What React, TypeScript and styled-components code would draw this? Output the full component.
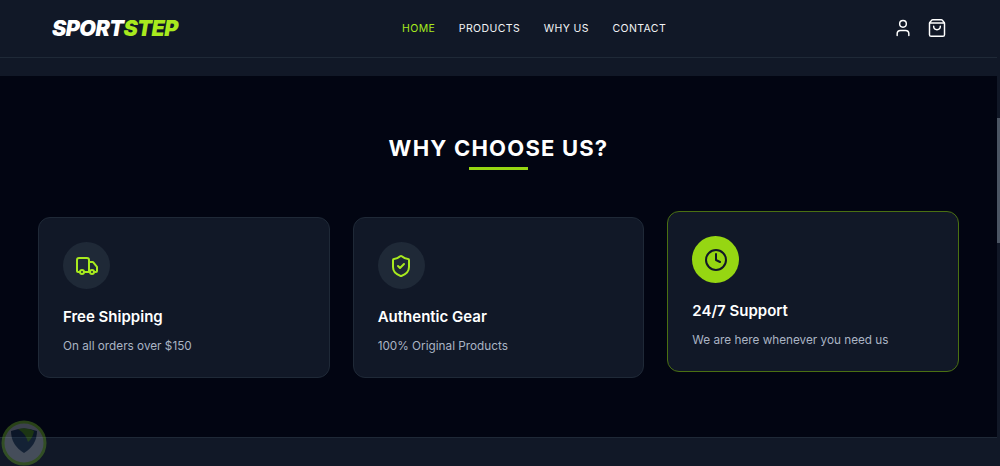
import React from "react";
import styled, { createGlobalStyle } from "styled-components";
import { Clock, ShieldCheck, ShoppingBag, Truck, User } from "lucide-react";

const LIME = "#96d612";
const LIME_BRIGHT = "#a8ea1e";

const GlobalStyle = createGlobalStyle`
  html, body {
    margin: 0;
    height: 100%;
    overflow: hidden;
    background: #020512;
    font-family: Inter, "Liberation Sans", sans-serif;
  }
`;

const Page = styled.div`
  height: 466px;
  margin-right: 3px;
  display: flex;
  flex-direction: column;
  overflow: hidden;
`;

const Header = styled.header`
  height: 58px;
  flex: none;
  box-sizing: border-box;
  padding: 0 50px 1px 52px;
  display: grid;
  grid-template-columns: 350px auto 1fr;
  align-items: center;
  background: #111827;
  border-bottom: 1px solid #1f2937;
`;

const Logo = styled.div`
  font-size: 21.5px;
  font-weight: 900;
  font-style: italic;
  letter-spacing: -0.55px;
  color: #fff;
  span {
    color: ${LIME_BRIGHT};
  }
`;

const Nav = styled.nav`
  display: flex;
  gap: 23.6px;
`;

const NavLink = styled.a<{ $active?: boolean }>`
  font-size: 10.5px;
  font-weight: 400;
  letter-spacing: 0.4px;
  color: ${(p) => (p.$active ? LIME_BRIGHT : "#f3f4f6")};
`;

const HeaderIcons = styled.div`
  justify-self: end;
  display: flex;
  align-items: center;
  gap: 14px;
  color: #fff;
`;

const Strip = styled.div`
  height: 18px;
  flex: none;
  background: #111827;
`;

const Section = styled.section`
  flex: none;
  height: 361px;
  padding: 58px 38px 0;
  box-sizing: border-box;
  background: #020512;
`;

const Title = styled.h2`
  margin: 0;
  text-align: center;
  font-size: 22px;
  line-height: 28px;
  font-weight: 700;
  letter-spacing: 1.2px;
  color: #fff;
`;

const Underline = styled.div`
  width: 59px;
  height: 3px;
  margin: 5px auto 47px;
  background: ${LIME};
`;

const Cards = styled.div`
  display: grid;
  grid-template-columns: repeat(3, 1fr);
  gap: 23px;
`;

const Card = styled.article<{ $featured?: boolean }>`
  height: 161px;
  box-sizing: border-box;
  padding: 24px;
  border-radius: 12px;
  background: #111827;
  border: 1px solid ${(p) => (p.$featured ? "#4a7012" : "#1f2937")};
  transform: translateY(${(p) => (p.$featured ? "-6px" : "0")});
`;

const IconCircle = styled.div<{ $featured?: boolean }>`
  width: 47px;
  height: 47px;
  border-radius: 50%;
  display: flex;
  align-items: center;
  justify-content: center;
  background: ${(p) => (p.$featured ? LIME : "#1f2937")};
  color: ${(p) => (p.$featured ? "#111827" : LIME_BRIGHT)};
`;

const CardTitle = styled.h3`
  margin: 16px 0 0;
  font-size: 15px;
  line-height: 24px;
  font-weight: 600;
  color: #fff;
`;

const CardText = styled.p`
  margin: 8px 0 0;
  font-size: 11.75px;
  line-height: 18px;
  color: #aab4c4;
`;

const FooterEdge = styled.div`
  flex: 1;
  background: #111827;
  border-top: 1px solid #1f2937;
`;

const ScrollTrack = styled.div`
  position: fixed;
  top: 0;
  right: 0;
  bottom: 0;
  width: 3px;
  background: #111827;
`;

const ScrollThumb = styled.div`
  position: fixed;
  top: 118px;
  right: 0;
  width: 3px;
  height: 125px;
  background: #4b5563;
`;

const Badge = styled.svg`
  position: fixed;
  left: 1px;
  top: 420px;
  width: 46px;
  height: 46px;
  opacity: 0.36;
  filter: blur(0.6px);
`;

const features = [
  { icon: Truck, title: "Free Shipping", text: "On all orders over $150" },
  { icon: ShieldCheck, title: "Authentic Gear", text: "100% Original Products" },
  { icon: Clock, title: "24/7 Support", text: "We are here whenever you need us", featured: true },
];

export default function App() {
  return (
    <>
      <GlobalStyle />
      <Page>
        <Header>
          <Logo>
            SPORT<span>STEP</span>
          </Logo>
          <Nav>
            <NavLink $active>HOME</NavLink>
            <NavLink>PRODUCTS</NavLink>
            <NavLink>WHY US</NavLink>
            <NavLink>CONTACT</NavLink>
          </Nav>
          <HeaderIcons>
            <User size={20} strokeWidth={1.75} />
            <ShoppingBag size={20} strokeWidth={1.75} />
          </HeaderIcons>
        </Header>
        <Strip />
        <Section>
          <Title>WHY CHOOSE US?</Title>
          <Underline />
          <Cards>
            {features.map((f) => (
              <Card key={f.title} $featured={f.featured}>
                <IconCircle $featured={f.featured}>
                  <f.icon size={24} strokeWidth={2} />
                </IconCircle>
                <CardTitle>{f.title}</CardTitle>
                <CardText>{f.text}</CardText>
              </Card>
            ))}
          </Cards>
        </Section>
        <FooterEdge />
      </Page>
      <ScrollTrack />
      <ScrollThumb />
      <Badge viewBox="0 0 46 46">
        <circle cx="23" cy="23" r="21" fill="#a3abb8" stroke="#6fb024" strokeWidth="3" />
        <path d="M10 11 Q23 6 36 11 Q36 25 23 33 Q10 25 10 11Z" fill="#1d3550" />
        <path d="M17 9 Q27 7 33 11 Q32 18 27 22 Q25 14 17 9Z" fill="#4d8a18" />
      </Badge>
    </>
  );
}
